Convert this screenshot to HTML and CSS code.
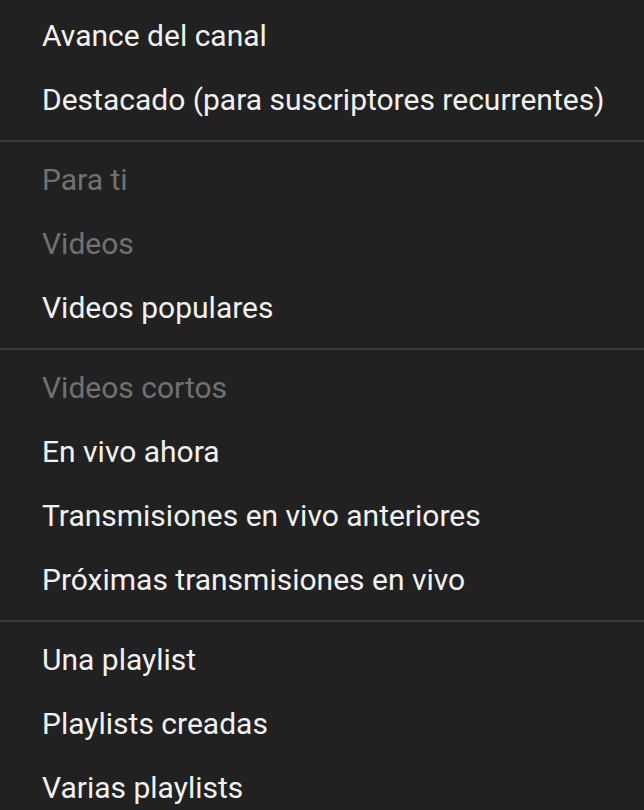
FILE: index.html
```html
<!DOCTYPE html>
<html lang="es">
<head>
<meta charset="utf-8">
<title>Menú</title>
<link rel="stylesheet" href="styles.css">
</head>
<body>
<div class="menu">
  <div class="group">
    <div class="item">Avance del canal</div>
    <div class="item">Destacado (para suscriptores recurrentes)</div>
  </div>
  <div class="sep"></div>
  <div class="group">
    <div class="item disabled">Para ti</div>
    <div class="item disabled">Videos</div>
    <div class="item">Videos populares</div>
  </div>
  <div class="sep"></div>
  <div class="group">
    <div class="item disabled">Videos cortos</div>
    <div class="item">En vivo ahora</div>
    <div class="item">Transmisiones en vivo anteriores</div>
    <div class="item">Próximas transmisiones en vivo</div>
  </div>
  <div class="sep"></div>
  <div class="group">
    <div class="item">Una playlist</div>
    <div class="item">Playlists creadas</div>
    <div class="item">Varias playlists</div>
  </div>
</div>
</body>
</html>
```
FILE: styles.css
```css
html, body {
  margin: 0;
  padding: 0;
  background: #212121;
  height: 100%;
  overflow: hidden;
}
.menu {
  padding-top: 4px;
  font-family: Roboto, "Noto Sans", sans-serif;
  font-size: 30px;
  color: #f1f1f1;
  display: flex;
  flex-direction: column;
}
.group {
  display: flex;
  flex-direction: column;
}
.item {
  height: 64px;
  box-sizing: border-box;
  padding-bottom: 2px;
  display: flex;
  align-items: center;
  padding-left: 42px;
  white-space: nowrap;
}
.item.disabled {
  color: #717171;
}
.sep {
  height: 2px;
  background: #3a3a3a;
  margin: 8px 0 6px;
}
```
